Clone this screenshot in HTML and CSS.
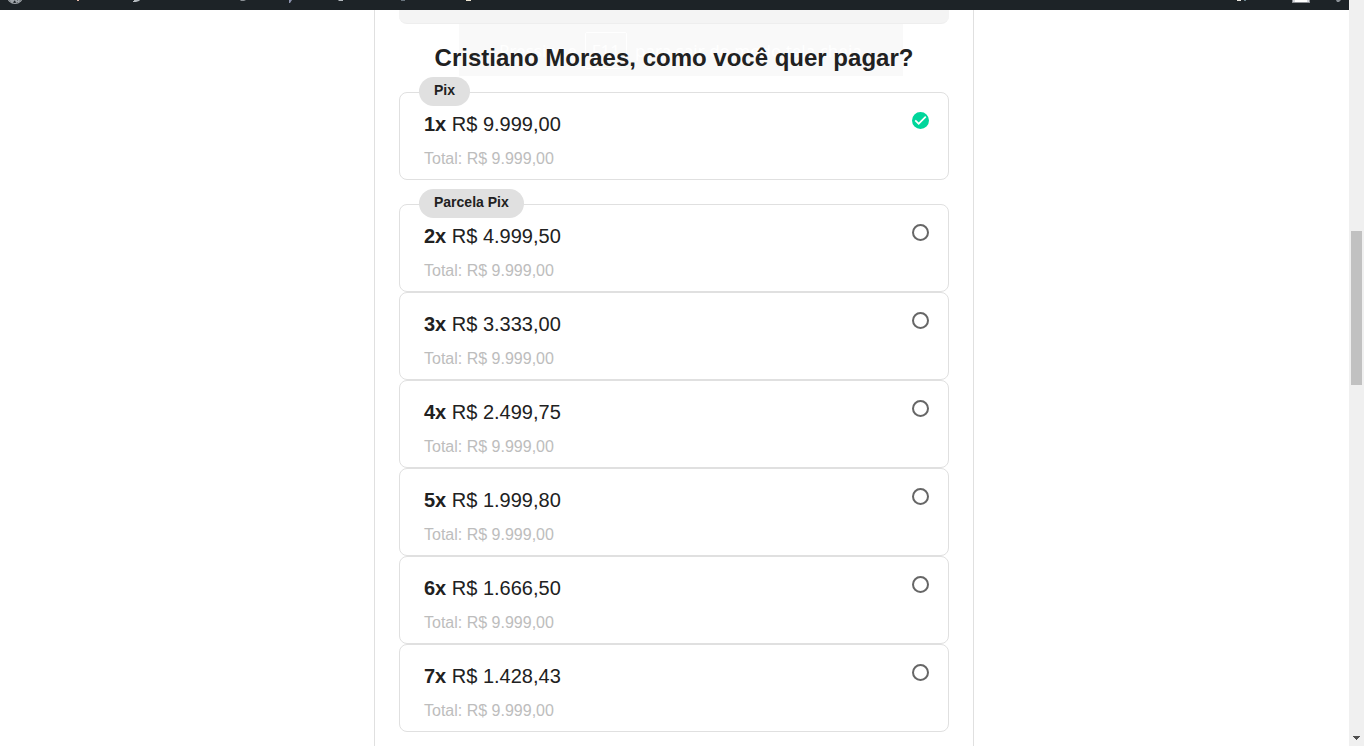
FILE: index.html
```html
<!DOCTYPE html>
<html lang="pt-BR">
<head>
<meta charset="utf-8">
<title>Pagamento</title>
<link rel="stylesheet" href="styles.css">
</head>
<body>
<div class="page">
  <header class="adminbar">
    <svg class="bar-left" width="480" height="10" viewBox="0 0 480 10" aria-hidden="true">
      <g fill="none" stroke="#a0a5aa">
        <circle cx="15" cy="-4" r="7.5" stroke-width="1.2"/>
        <path d="M9 -2L13 2.500M13 1L15 -2L17 2.500M18 2L20.500 -3" stroke-width="2"/>
      </g>
      <path d="M77 0h2v1h-2z" fill="#e6b9a8"/>
      <path d="M134 0h6l-1 1l-3 1h-3v-1h1z" fill="#b4b9be"/>
      <path d="M240 0h6l-2 1h-3z" fill="#8a9095"/>
      <path d="M289 0h3l-2 3h-1z" fill="#8c93ad"/>
      <path d="M338 0h5v1h-4z" fill="#b4b9be"/>
      <path d="M401 0h4v1h-4z" fill="#68737c"/>
      <path d="M466 0h5v1h-5z" fill="#eee6d2"/>
    </svg>
    <svg class="bar-right" width="120" height="10" viewBox="0 0 120 10" aria-hidden="true">
      <path d="M8 0h4v1h-4z" fill="#e8e4dc"/>
      <path d="M15 0h2v1h-2z" fill="#66808a"/>
      <path d="M63 0h18v3h-18z" fill="#8c8f94"/>
      <path d="M64 0h16v2h-16z" fill="#d6d8de"/>
      <path d="M66 0h12v2h-12z" fill="#fff"/>
      <path d="M107 0h5l-2 2h-2z" fill="#8b9197"/>
    </svg>
  </header>
  <div class="content">
  <main class="checkout">
    <div class="panel"></div>
    <h1 class="title">Cristiano Moraes, como você quer pagar?</h1>
    <form class="options">
      <div class="group">
        <label class="card"><span class="tag">Pix</span><span class="info"><span class="price"><b>1x</b> R$ 9.999,00</span><span class="total">Total: R$ 9.999,00</span></span><input class="choice" type="radio" name="parcelas" checked></label>
      </div>
      <div class="group">
        <label class="card"><span class="tag">Parcela Pix</span><span class="info"><span class="price"><b>2x</b> R$ 4.999,50</span><span class="total">Total: R$ 9.999,00</span></span><input class="choice" type="radio" name="parcelas"></label>
        <label class="card"><span class="info"><span class="price"><b>3x</b> R$ 3.333,00</span><span class="total">Total: R$ 9.999,00</span></span><input class="choice" type="radio" name="parcelas"></label>
        <label class="card"><span class="info"><span class="price"><b>4x</b> R$ 2.499,75</span><span class="total">Total: R$ 9.999,00</span></span><input class="choice" type="radio" name="parcelas"></label>
        <label class="card"><span class="info"><span class="price"><b>5x</b> R$ 1.999,80</span><span class="total">Total: R$ 9.999,00</span></span><input class="choice" type="radio" name="parcelas"></label>
        <label class="card"><span class="info"><span class="price"><b>6x</b> R$ 1.666,50</span><span class="total">Total: R$ 9.999,00</span></span><input class="choice" type="radio" name="parcelas"></label>
        <label class="card"><span class="info"><span class="price"><b>7x</b> R$ 1.428,43</span><span class="total">Total: R$ 9.999,00</span></span><input class="choice" type="radio" name="parcelas"></label>
      </div>
    </form>
  </main>
  </div>
  <div class="toast">Pressione <kbd class="key">F11</kbd> para sair do modo tela cheia</div>
</div>
<div class="scrollbar" aria-hidden="true">
  <div class="thumb"></div>
  <svg class="arrow" width="7" height="4" viewBox="0 0 7 4"><path d="M0 0h7v1h-1v1h-1v1h-1v1h-1v-1h-1v-1h-1v-1h-1z" fill="#505050"/></svg>
</div>
</body>
</html>
```
FILE: styles.css
```css
* { box-sizing: border-box; }

body {
  margin: 0;
  display: flex;
  height: 100vh;
  overflow: hidden;
  background: #fff;
  color: #212121;
  font-family: "Liberation Sans", Arial, sans-serif;
}

.page {
  position: relative;
  flex: 1;
  display: flex;
  flex-direction: column;
  min-width: 0;
}

.adminbar {
  display: flex;
  justify-content: space-between;
  flex: none;
  overflow: hidden;
  background: #1d2327;
}

.content {
  flex: 1 0 auto;
  display: flex;
  justify-content: center;
  padding-right: 1px;
}

.checkout {
  width: 100%;
  max-width: 600px;
  padding: 0 24px;
  border: solid #e0e0e0;
  border-width: 0 1px;
}

.panel {
  height: 14px;
  border-bottom: 1px solid #eee;
  border-radius: 0 0 8px 8px;
  background: #f4f4f4;
}

.title {
  position: relative;
  z-index: 2;
  margin: 18px 0;
  font-size: 24px;
  line-height: 32px;
  text-align: center;
  white-space: nowrap;
}

.options {
  display: grid;
  gap: 24px;
}

.card {
  position: relative;
  display: flex;
  justify-content: space-between;
  padding: 15px 19px 8px 24px;
  border: 1px solid #e0e0e0;
  border-radius: 8px;
}

.info {
  display: grid;
  gap: 7px;
}

.price {
  font-size: 20px;
  line-height: 32px;
}

.total {
  color: #bdbdbd;
  font-size: 16px;
  line-height: 24px;
}

.tag {
  position: absolute;
  top: -16px;
  left: 19px;
  padding: 1px 15px 4px;
  border-radius: 15px;
  background: #e0e0e0;
  font-size: 14px;
  font-weight: 700;
  line-height: 24px;
}

.choice {
  appearance: none;
  position: relative;
  width: 17px;
  height: 17px;
  margin: 4px 0 0;
  border: 2px solid #666;
  border-radius: 50%;
}

.choice:checked {
  border-color: #00d69b;
  background: #00d69b;
}

.choice:checked::after {
  content: "";
  position: absolute;
  inset: 0;
  background: #fff;
  clip-path: polygon(5% 53%, 14% 44%, 36% 66%, 86% 16%, 95% 25%, 36% 84%);
}

.toast {
  position: absolute;
  z-index: 1;
  top: 24px;
  left: 50%;
  transform: translateX(-50%);
  display: flex;
  align-items: center;
  justify-content: center;
  gap: 8px;
  width: 444px;
  height: 52px;
  margin-left: 6px;
  background: #f9f9f9;
  color: #fff;
  font: 17px "Noto Sans", sans-serif;
  white-space: nowrap;
}

.key {
  padding: 6px;
  border: 1px solid #fff;
  border-radius: 2px;
  font: inherit;
}

.scrollbar {
  display: flex;
  flex-direction: column;
  align-items: center;
  justify-content: space-between;
  width: 15px;
  padding: 231px 0 6px;
  background: #f0f0f0;
}

.thumb {
  width: 11px;
  height: 154px;
  background: #c1c1c1;
}
```
